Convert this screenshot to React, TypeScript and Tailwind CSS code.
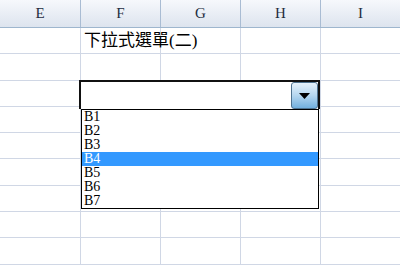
const columns = ['E', 'F', 'G', 'H', 'I'];
const items = ['B1', 'B2', 'B3', 'B4', 'B5', 'B6', 'B7'];

const Cell = ({ first, children }: { first?: boolean; children?: React.ReactNode }) => (
  <div
    className={`${first ? 'w-[81px]' : 'w-[80px]'} shrink-0 h-full border-r border-b border-[#d0d7e5] relative`}
  >
    {children}
  </div>
);

export default function App() {
  const selected = 3;

  return (
    <div className="w-[400px] h-[267px] overflow-hidden bg-white relative font-['Liberation_Serif',serif]">
      {/* column headers */}
      <div className="flex h-[28px] border-b border-[#9eb6ce] bg-gradient-to-b from-[#f6f8fc] to-[#dde4ee]">
        {columns.map((c, i) => (
          <div
            key={c}
            className={`${i === 0 ? 'w-[81px]' : 'w-[80px]'} shrink-0 border-r border-[#a9bcd3] flex items-center justify-center text-[15px] text-[#1e2d40]`}
          >
            {c}
          </div>
        ))}
      </div>

      {/* rows */}
      {Array.from({ length: 9 }).map((_, r) => (
        <div key={r} className="flex h-[26.3px]">
          {columns.map((c, i) => (
            <Cell key={c} first={i === 0}>
              {r === 0 && i === 1 && (
                <span className="absolute left-[3px] top-[2px] whitespace-nowrap text-[17px] leading-[22px] text-black font-['Liberation_Serif','Noto_Sans_CJK_TC',serif]">
                  下拉式選單(二)
                </span>
              )}
            </Cell>
          ))}
        </div>
      ))}

      {/* combo box */}
      <div className="absolute left-[79px] top-[80px] w-[241px]">
        <div className="h-[29px] border-t-2 border-l-2 border-r-2 border-[#111] bg-white flex justify-end items-start">
          <div className="w-[27px] h-[27px] rounded-[3px] border border-[#4f7390] bg-gradient-to-b from-[#e6f2fb] via-[#b4d6ef] to-[#72b0de] flex items-center justify-center">
            <svg width="11" height="6" viewBox="0 0 11 6">
              <path d="M0 0 H11 L5.5 6 Z" fill="#000" />
            </svg>
          </div>
        </div>
        <div className="ml-[2px] w-[238px] border border-black bg-white">
          {items.map((it, i) => (
            <div
              key={it}
              className={`h-[14px] leading-[14px] text-[14px] pl-[2px] ${
                i === selected ? 'bg-[#3399ff] text-white' : 'text-black'
              }`}
            >
              {it}
            </div>
          ))}
        </div>
      </div>
    </div>
  );
}
